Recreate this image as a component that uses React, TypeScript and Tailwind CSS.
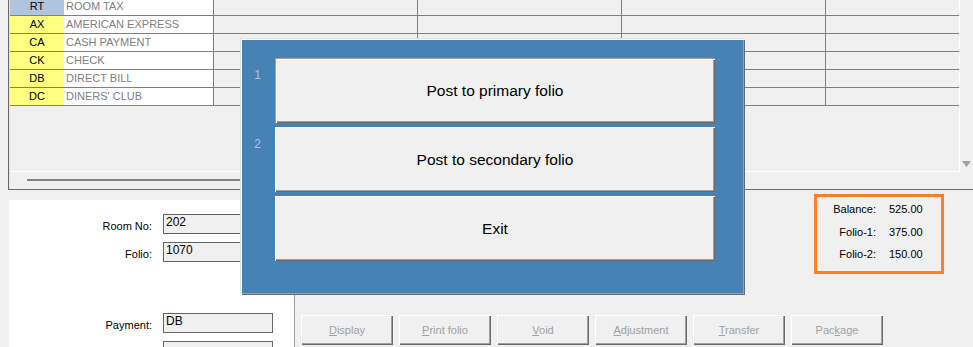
const ROWS = [
  { code: 'RT', name: 'ROOM TAX', tone: 'bg-[#b0c4de]' },
  { code: 'AX', name: 'AMERICAN EXPRESS', tone: 'bg-[#ffff80]' },
  { code: 'CA', name: 'CASH PAYMENT', tone: 'bg-[#ffff80]' },
  { code: 'CK', name: 'CHECK', tone: 'bg-[#ffff80]' },
  { code: 'DB', name: 'DIRECT BILL', tone: 'bg-[#ffff80]' },
  { code: 'DC', name: "DINERS' CLUB", tone: 'bg-[#ffff80]' },
];

const ACTIONS = [
  { pre: '', key: 'D', post: 'isplay' },
  { pre: '', key: 'P', post: 'rint folio' },
  { pre: '', key: 'V', post: 'oid' },
  { pre: '', key: 'A', post: 'djustment' },
  { pre: '', key: 'T', post: 'ransfer' },
  { pre: 'Pac', key: 'k', post: 'age' },
];

const TOTALS = [
  ['Balance:', '525.00'],
  ['Folio-1:', '375.00'],
  ['Folio-2:', '150.00'],
];

const CHOICES = [
  { no: '1', label: 'Post to primary folio', focus: true },
  { no: '2', label: 'Post to secondary folio', focus: false },
  { no: '', label: 'Exit', focus: false },
];

function Field({ label, value, className = '' }: { label: string; value: string; className?: string }) {
  return (
    <div className={`flex h-[20px] ${className}`}>
      <div className="w-[143px] text-right pt-[6px] text-[11px] leading-[13px]">{label}</div>
      <div className="ml-[11px] w-[110px] h-[20px] border border-[#646464] bg-[#f0f0f0] pl-[2px] text-[12px] leading-[14px]">
        {value}
      </div>
    </div>
  );
}

export default function App() {
  return (
    <div className="relative w-[973px] h-[347px] overflow-hidden bg-[#f0f0f0] font-['Liberation_Sans',Arial,sans-serif] text-black">
      {/* charge code grid */}
      <div className="ml-[8px] h-[190px] border-l border-b border-[#696969]">
        <div className="h-full flex flex-col border-l border-[#e3e3e3]">
          <div className="flex h-[172px]">
            <div className="w-[950px] h-[172px] border-r border-b border-white overflow-hidden">
              <div className="-mt-[2px]">
                {ROWS.map((r) => (
                  <div key={r.code} className="flex h-[18px] border-b border-[#808080] text-[11px] leading-[17px]">
                    <div className={`w-[54px] text-center ${r.tone}`}>{r.code}</div>
                    <div className="w-[150px] bg-white border-r border-[#808080] pl-[2px] text-[#808080]">{r.name}</div>
                    <div className="w-[204px] border-r border-[#808080]" />
                    <div className="w-[204px] border-r border-[#808080]" />
                    <div className="w-[204px] border-r border-[#808080]" />
                    <div className="flex-1" />
                  </div>
                ))}
              </div>
            </div>
            <div className="flex-1 flex flex-col justify-end items-center pb-[5px]">
              <svg width="9" height="6" viewBox="0 0 9 6">
                <path d="M0 0h9L4.5 6z" fill="#a0a0a0" />
              </svg>
            </div>
          </div>
          <div className="flex-1 pl-[17px] pt-[7px]">
            <div className="w-[600px] h-[2px] bg-[#808080]" />
          </div>
        </div>
      </div>

      {/* folio details */}
      <div className="flex h-[157px]">
        <div className="ml-[9px] mt-[10px] w-[285px] h-[147px] bg-white pt-[14px]">
          <Field label="Room No:" value="202" />
          <Field label="Folio:" value="1070" className="mt-[8px]" />
          <Field label="Payment:" value="DB" className="mt-[51px]" />
          <Field label="" value="" className="mt-[8px]" />
        </div>
        <div className="flex-1 flex flex-col">
          <div className="h-[105px] flex justify-end items-start pt-[4px] pr-[29px]">
            <div className="w-[130px] h-[80px] border-[3px] border-[#ff7f27] pt-[1px] text-[11px]">
              {TOTALS.map(([k, v]) => (
                <div key={k} className="flex h-[22.5px] items-center">
                  <div className="w-[59px] text-right">{k}</div>
                  <div className="ml-[13px]">{v}</div>
                </div>
              ))}
            </div>
          </div>
          <div className="flex-1 border-l border-[#a0a0a0] pt-[20px] pl-[6px] flex items-start gap-[6px]">
            {ACTIONS.map((a) => (
              <div
                key={a.key}
                className="w-[92px] h-[30px] flex items-center justify-center text-[11px] text-[#a0a0a0] shadow-[inset_1px_1px_0_#fff,inset_-1px_-1px_0_#696969,inset_-2px_-2px_0_#a0a0a0]"
              >
                <span>
                  {a.pre}
                  <u>{a.key}</u>
                  {a.post}
                </span>
              </div>
            ))}
          </div>
        </div>
      </div>

      {/* posting dialog */}
      <div className="absolute left-[240px] top-[38px] w-[505px] h-[257px] bg-[#4682b4] pt-[20px] pr-[30px] flex flex-col gap-[4px] shadow-[inset_1px_1px_0_#e3e3e3,inset_2px_2px_0_#fff,inset_-1px_-1px_0_#696969,inset_-2px_-2px_0_#a0a0a0]">
        {CHOICES.map((c) => (
          <div key={c.label} className="flex h-[65px]">
            <div className="w-[35px] text-center pt-[10px] text-[12px] leading-[15px] text-[#b0c4de]">{c.no}</div>
            <div
              className={`flex-1 h-full bg-[#f0f0f0] flex items-center justify-center text-[15.5px] ${
                c.focus
                  ? 'shadow-[inset_1px_1px_0_#a0a0a0,inset_2px_2px_0_#fff,inset_-1px_-1px_0_#696969,inset_-2px_-2px_0_#a0a0a0]'
                  : 'shadow-[inset_1px_1px_0_#fff,inset_-1px_-1px_0_#696969,inset_-2px_-2px_0_#a0a0a0]'
              }`}
            >
              {c.label}
            </div>
          </div>
        ))}
      </div>
    </div>
  );
}
